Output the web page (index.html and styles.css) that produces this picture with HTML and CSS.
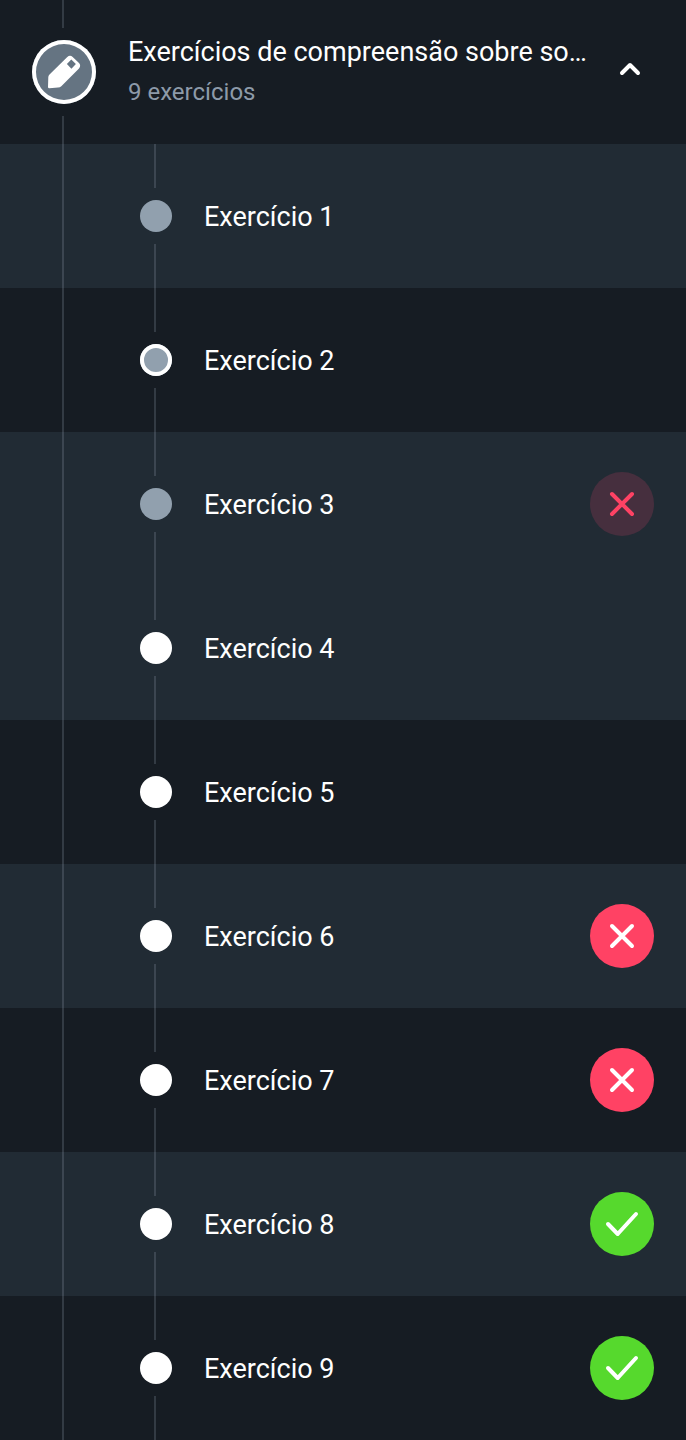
FILE: index.html
```html
<!DOCTYPE html>
<html lang="pt-BR">
<head>
<meta charset="utf-8">
<meta name="viewport" content="width=device-width, initial-scale=1">
<title>Exercícios de compreensão</title>
<link rel="stylesheet" href="styles.css">
</head>
<body>
<svg class="defs" aria-hidden="true">
  <symbol id="cross" viewBox="0 0 64 64"><path d="M22 22 42 42M42 22 22 42"/></symbol>
  <symbol id="check" viewBox="0 0 64 64"><path d="M18 32 27.700 42 46 22"/></symbol>
</svg>
<main>
  <button class="header" type="button" aria-expanded="true" aria-controls="exercises">
    <span class="track track-main">
      <span class="line"></span>
      <span class="badge">
        <svg viewBox="0 0 64 64" aria-hidden="true"><path fill="#fff" fill-rule="evenodd" d="M17.500 34.500 35.300 16.900Q38 14.600 40.700 16.900L47 23Q49.300 25.700 47 28.500L29.300 46.200Q28 47.500 26 47.600L17.300 48.200Q16 48.200 16 47L16.300 37Q16.400 35.500 17.500 34.500ZM39.300 19.600 34.900 24.100 39.400 28.700 43.900 24.100Z"/></svg>
      </span>
      <span class="line"></span>
    </span>
    <span class="heading">
      <span class="title">Exercícios de compreensão sobre so…</span>
      <span class="subtitle">9 exercícios</span>
    </span>
    <svg class="chevron" viewBox="0 0 24 24" aria-hidden="true"><path d="M4 16 12 8 20 16"/></svg>
  </button>
  <ol class="list" id="exercises">
    <li><a class="row alt" href="#1"><span class="track"><span class="line"></span><span class="dot muted"></span><span class="line"></span></span><span class="name">Exercício 1</span></a></li>
    <li><a class="row" href="#2"><span class="track"><span class="line"></span><span class="dot muted ring"></span><span class="line"></span></span><span class="name">Exercício 2</span></a></li>
    <li><a class="row alt" href="#3"><span class="track"><span class="line"></span><span class="dot muted"></span><span class="line"></span></span><span class="name">Exercício 3</span><svg class="status faded" role="img" aria-label="Incorreto"><use href="#cross"/></svg></a></li>
    <li><a class="row alt" href="#4"><span class="track"><span class="line"></span><span class="dot"></span><span class="line"></span></span><span class="name">Exercício 4</span></a></li>
    <li><a class="row" href="#5"><span class="track"><span class="line"></span><span class="dot"></span><span class="line"></span></span><span class="name">Exercício 5</span></a></li>
    <li><a class="row alt" href="#6"><span class="track"><span class="line"></span><span class="dot"></span><span class="line"></span></span><span class="name">Exercício 6</span><svg class="status wrong" role="img" aria-label="Incorreto"><use href="#cross"/></svg></a></li>
    <li><a class="row" href="#7"><span class="track"><span class="line"></span><span class="dot"></span><span class="line"></span></span><span class="name">Exercício 7</span><svg class="status wrong" role="img" aria-label="Incorreto"><use href="#cross"/></svg></a></li>
    <li><a class="row alt" href="#8"><span class="track"><span class="line"></span><span class="dot"></span><span class="line"></span></span><span class="name">Exercício 8</span><svg class="status right" role="img" aria-label="Correto"><use href="#check"/></svg></a></li>
    <li><a class="row" href="#9"><span class="track"><span class="line"></span><span class="dot"></span><span class="line"></span></span><span class="name">Exercício 9</span><svg class="status right" role="img" aria-label="Correto"><use href="#check"/></svg></a></li>
  </ol>
</main>
</body>
</html>
```
FILE: styles.css
```css
*,
*::before {
  box-sizing: border-box;
}

body {
  margin: 0;
  background: #161c23;
  color: #fff;
  font-family: Roboto, sans-serif;
  font-size: 27px;
  line-height: 32px;
}

.defs {
  display: none;
}

.header {
  display: flex;
  align-items: stretch;
  width: 100%;
  min-height: 144px;
  padding: 0 32px;
  border: 0;
  background: #161c23;
  color: inherit;
  font: inherit;
  text-align: left;
  cursor: pointer;
}

/* Dot with a connector above and below; the connector is a right border
   on a half-width box. */
.track {
  display: flex;
  flex: none;
  flex-direction: column;
  gap: 12px;
  width: 32px;
}

.track-main {
  width: 64px;
}

.line {
  flex: 1;
  width: 50%;
  border-right: 2px solid rgba(145, 160, 174, 0.24);
}

.badge {
  height: 64px;
  border-radius: 50%;
  background: #657482;
  box-shadow: inset 0 0 0 4px #fff;
}

.badge svg {
  display: block;
  width: 64px;
  height: 64px;
}

.heading {
  display: flex;
  flex: 1;
  flex-direction: column;
  gap: 8px;
  min-width: 0;
  padding: 36px 0;
  margin-left: 32px;
}

.title {
  overflow: hidden;
  text-overflow: ellipsis;
  white-space: nowrap;
}

.subtitle {
  color: #8d9aa9;
  font-size: 24px;
}

.chevron {
  flex: none;
  width: 24px;
  height: 24px;
  margin: 57px 12px 0;
  fill: none;
  stroke: #fff;
  stroke-width: 4;
  stroke-linecap: round;
  stroke-linejoin: round;
}

.list {
  margin: 0;
  padding: 0;
  list-style: none;
}

.row {
  display: flex;
  align-items: center;
  min-height: 144px;
  padding-right: 32px;
  background: #161c23;
  color: inherit;
  text-decoration: none;
}

.row.alt {
  background: #212b34;
}

.row::before {
  content: "";
  align-self: stretch;
  flex: none;
  width: 64px;
  margin-right: 76px;
  border-right: 2px solid rgba(145, 160, 174, 0.24);
}

.row .track {
  align-self: stretch;
}

.dot {
  height: 32px;
  border-radius: 50%;
  background: #fff;
}

.dot.muted {
  background: #91a0ae;
}

.dot.ring {
  box-shadow: inset 0 0 0 4px #fff;
}

.name {
  flex: 1;
  padding: 2px 0 0 32px;
}

.status {
  flex: none;
  width: 64px;
  height: 64px;
  border-radius: 50%;
  fill: none;
  stroke: #fff;
  stroke-width: 4;
  stroke-linecap: round;
  stroke-linejoin: round;
}

.wrong {
  background: #ff4264;
}

.right {
  background: #56d92d;
}

.faded {
  background: #462f3e;
  stroke: #ff4264;
}
```
